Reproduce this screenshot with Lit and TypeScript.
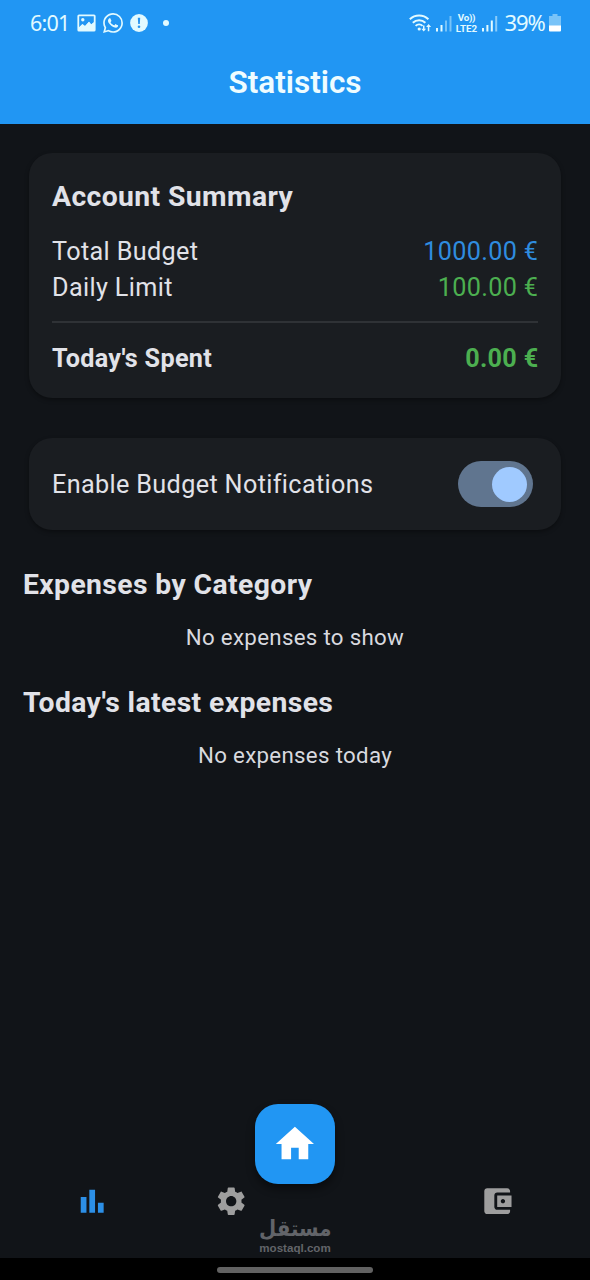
import { LitElement, html, css, svg } from "lit";
import { customElement, property } from "lit/decorators.js";

@customElement("status-bar")
class StatusBar extends LitElement {
  static styles = css`
    :host { display: flex; justify-content: space-between; height: 45px; padding: 0 29px 0 30px; box-sizing: border-box; color: #e2faff; }
    .side { display: flex; align-items: center; height: 46px; }
    .time { font: 400 21.5px/46px "Noto Sans", sans-serif; letter-spacing: -0.8px; width: 47px; }
    .percent { font: 400 22px/44px "Noto Sans", sans-serif; height: 46px; letter-spacing: -1.1px; width: 44.5px; margin-left: 2.5px; white-space: nowrap; }
    .net { display: flex; flex-direction: column; align-items: center; width: 23px; margin: 0 4px 0 3px; font: 700 9.8px/11px Roboto, sans-serif; }
    .net span { display: block; height: 11px; }
    .net span:first-child { letter-spacing: -0.3px; }
    svg { display: block; fill: currentColor; }
    .gap { margin-left: 7px; }
    .dot { width: 6px; height: 6px; border-radius: 50%; background: currentColor; margin-left: 15px; }
    .wifi { margin-right: 3px; }
  `;
  render() {
    return html`
      <div class="side">
        <span class="time">6:01</span>
        <svg width="19" height="18" viewBox="0 0 19 18"><path fill-rule="evenodd" d="M2 0.5h15a1.6 1.6 0 0 1 1.6 1.6v13.8a1.6 1.6 0 0 1-1.6 1.6H2a1.6 1.6 0 0 1-1.6-1.6V2.100a1.600 1.600 0 0 1 1.600-1.600zM2.200 2.300v11l3.300-3.200 2.500 1.900 4-4.200 2.200 2.700 2.600-2.200V2.300zM5.800 4a1.700 1.700 0 1 1 0 3.400 1.700 1.700 0 0 1 0-3.400z"/><path d="M2 17v-3.500l3.300-3.300 2.700 2 4-4.400 2.200 2.700 2.800-2.200V17z"/></svg>
        <svg class="gap" width="20" height="20" viewBox="0 0 24 24"><path d="M17.472 14.382c-.297-.149-1.758-.867-2.030-.967-.273-.099-.471-.148-.670.150-.197.297-.767.966-.940 1.164-.173.199-.347.223-.644.075-.297-.150-1.255-.463-2.390-1.475-.883-.788-1.480-1.761-1.653-2.059-.173-.297-.018-.458.130-.606.134-.133.298-.347.446-.520.149-.174.198-.298.298-.497.099-.198.050-.371-.025-.520-.075-.149-.669-1.612-.916-2.207-.242-.579-.487-.500-.669-.510-.173-.008-.371-.010-.570-.010-.198 0-.520.074-.792.372-.272.297-1.040 1.016-1.040 2.479 0 1.462 1.065 2.875 1.213 3.074.149.198 2.096 3.200 5.077 4.487.709.306 1.262.489 1.694.625.712.227 1.360.195 1.871.118.571-.085 1.758-.719 2.006-1.413.248-.694.248-1.289.173-1.413-.074-.124-.272-.198-.570-.347m-5.421 7.403h-.004a9.870 9.870 0 0 1-5.031-1.378l-.361-.214-3.741.982.998-3.648-.235-.374a9.860 9.860 0 0 1-1.510-5.260c.001-5.450 4.436-9.884 9.888-9.884 2.640 0 5.122 1.030 6.988 2.898a9.825 9.825 0 0 1 2.893 6.994c-.003 5.450-4.437 9.884-9.885 9.884m8.413-18.297A11.815 11.815 0 0 0 12.050 0C5.495 0 .160 5.335.157 11.892c0 2.096.547 4.142 1.588 5.945L.057 24l6.305-1.654a11.882 11.882 0 0 0 5.683 1.448h.005c6.554 0 11.890-5.335 11.893-11.893a11.821 11.821 0 0 0-3.480-8.413z"/></svg>
        <svg class="gap" width="18" height="18" viewBox="0 0 18 18"><circle cx="9" cy="9" r="8.900"/><path d="M7.800 3.800h2.400l-.4 6.200H8.200z" fill="#2a94ee"/><circle cx="9" cy="12.800" r="1.300" fill="#2a94ee"/></svg>
        <span class="dot"></span>
      </div>
      <div class="side">
        <svg class="wifi" width="24" height="20" viewBox="0 0 24 20">
          <g fill="none" stroke="currentColor" stroke-width="2"><path d="M0.800 6.300a13.500 13.500 0 0 1 18.600 0"/><path d="M3.800 9.700a9.200 9.200 0 0 1 12.600 0"/><path d="M6.600 12.900a5 5 0 0 1 7 0"/></g>
          <circle cx="10.200" cy="16" r="1.600"/>
          <path d="M14 12.500h1.500v3.300h1.600l-2.400 2.700-2.400-2.700H14zM20.300 18.300h-1.500V14h-1.700l2.500-3 2.500 3h-1.800z"/>
        </svg>
        <svg width="16" height="18" viewBox="0 0 16 18"><path d="M0 14h2v3.500H0zM4.500 11h2v6.500h-2z"/><path opacity=".45" d="M9 6.500h2v11H9zM13.500 2h2v15.500h-2z"/></svg>
        <span class="net"><span>Vo))</span><span>LTE2</span></span>
        <svg width="20" height="18" viewBox="0 0 20 18"><path d="M0 14h2v3.500H0zM4.400 11h2v6.500h-2zM8.800 6.500h2v11h-2z"/><path opacity=".55" d="M13.200 2h2v15.500h-2z"/></svg>
        <span class="percent">39%</span>
        <svg width="12" height="18" viewBox="0 0 12 18"><path opacity=".45" d="M3.500 0h5v2H12v10H0V2h3.500z"/><path fill="#fff" d="M0 11.500h12v5a1 1 0 0 1-1 1H1a1 1 0 0 1-1-1z"/></svg>
      </div>`;
  }
}

@customElement("summary-row")
class SummaryRow extends LitElement {
  @property() label = "";
  @property() value = "";
  static styles = css`
    :host { display: flex; justify-content: space-between; height: 36px; line-height: 37px; font-size: 25.2px; white-space: nowrap; letter-spacing: 0.36px; }
    .value { color: var(--amount, #4caf50); margin-right: -0.4px; }
  `;
  render() {
    return html`<span>${this.label}</span><span class="value">${this.value}</span>`;
  }
}

const icons = {
  stats: svg`<path d="M4 9h4v11H4zm12 4h4v7h-4zm-6-9h4v16h-4z"/>`,
  settings: svg`<path d="M19.140 12.940c.040-.300.060-.610.060-.940 0-.320-.020-.640-.070-.940l2.030-1.580c.180-.140.230-.410.120-.610l-1.920-3.320c-.120-.220-.370-.290-.590-.220l-2.390.960c-.500-.380-1.030-.700-1.620-.940l-.360-2.540c-.040-.240-.240-.410-.480-.410h-3.840c-.240 0-.430.170-.470.410l-.360 2.540c-.590.240-1.130.570-1.620.940l-2.390-.960c-.220-.080-.470 0-.590.220L2.740 8.870c-.120.210-.080.470.120.610l2.030 1.580c-.050.300-.090.630-.090.940s.020.640.070.940l-2.030 1.580c-.180.140-.230.410-.120.610l1.920 3.320c.120.220.370.290.590.220l2.390-.960c.500.380 1.030.700 1.620.940l.360 2.540c.050.240.240.410.480.410h3.840c.240 0 .440-.170.470-.410l.360-2.540c.590-.240 1.130-.560 1.620-.940l2.390.960c.220.080.470 0 .590-.220l1.920-3.320c.120-.220.070-.470-.120-.610l-2.010-1.580zM12 15.600c-1.980 0-3.600-1.620-3.600-3.600s1.620-3.600 3.600-3.600 3.600 1.620 3.600 3.600-1.620 3.600-3.600 3.600z"/>`,
  wallet: svg`<path d="M21 18v1c0 1.100-.900 2-2 2H5c-1.110 0-2-.900-2-2V5c0-1.100.890-2 2-2h14c1.100 0 2 .900 2 2v1h-9c-1.110 0-2 .900-2 2v8c0 1.100.890 2 2 2h9zm-9-2h10V8H12v8zm4-2.500c-.830 0-1.500-.670-1.500-1.500s.670-1.500 1.500-1.500 1.500.670 1.500 1.500-.670 1.500-1.500 1.500z"/>`,
};

@customElement("app-root")
class AppRoot extends LitElement {
  static styles = css`
    :host { display: flex; flex-direction: column; width: 590px; height: 1280px; overflow: hidden; background: #111418; color: #e1e2e8; font-family: Roboto, sans-serif; }
    header { background: #2196f3; height: 124px; flex: none; }
    h1 { margin: 0; text-align: center; font-size: 31.5px; line-height: 76px; font-weight: 600; color: #eefcff; }
    main { flex: 1; padding: 29px 29px 0; }
    .card { background: #1a1d21; border-radius: 23px; box-shadow: 0 2px 4px rgba(0,0,0,.35); box-sizing: border-box; padding: 23px; }
    .summary { height: 245px; }
    h2 { margin: 0; font-size: 28.3px; height: 41px; line-height: 42px; font-weight: 700; letter-spacing: 0.4px; white-space: nowrap; }
    .rows { padding-top: 16px; }
    .budget { --amount: #2f8cdf; }
    .spent { font-weight: 700; letter-spacing: 0.3px; }
    .rule { height: 2px; margin: 16px 0 17px; background: #2f3236; }
    .notify { margin-top: 40px; height: 92px; display: flex; align-items: center; justify-content: space-between; padding-right: 28px; font-size: 25.2px; letter-spacing: 0.36px; }
    .notify > :first-child { line-height: 36px; padding-top: 2px; }
    .switch { width: 75px; height: 46px; border-radius: 23px; background: #60758f; box-sizing: border-box; padding: 0 6px; display: flex; align-items: center; justify-content: flex-end; }
    .thumb { width: 35px; height: 35px; border-radius: 50%; background: #a0caff; }
    .section { margin: 34px 0 0 -6px; }
    .section + .section { margin-top: 29px; }
    .empty { margin: 16px 0 0 6px; height: 32px; line-height: 33px; text-align: center; font-size: 22.3px; letter-spacing: 0.3px; color: #d8d9df; }
    footer { height: 154px; flex: none; display: flex; flex-direction: column; align-items: center; }
    .fab { width: 80px; height: 80px; flex: none; border-radius: 23px; background: #2196f3; display: flex; align-items: center; justify-content: center; box-shadow: 0 5px 9px rgba(0,0,0,.45); }
    .fab svg { width: 45.800px; height: 45.800px; fill: #fff; }
    nav { display: flex; width: 100%; height: 34.400px; flex: none; box-sizing: border-box; padding-left: 75px; }
    nav svg { width: 34.400px; height: 34.400px; fill: #9e9e9e; }
    nav .active { fill: #2c8fe6; }
    nav .cog { margin-left: 104.500px; }
    nav .last { margin-left: 232px; }
    .brand { display: flex; flex-direction: column; align-items: center; color: #626469; white-space: nowrap; margin-top: -2px; }
    .ar { font: 700 22px/26px "DejaVu Sans", sans-serif; transform: scaleX(.9); }
    .site { font: 700 11.600px/12px "Liberation Sans", sans-serif; }
    .gesture { height: 22px; flex: none; background: #000; display: flex; align-items: center; justify-content: center; }
    .pill { width: 156px; height: 6px; border-radius: 3px; background: #626262; margin-top: 2px; }
  `;
  render() {
    return html`
      <header><status-bar></status-bar><h1>Statistics</h1></header>
      <main>
        <section class="card summary">
          <h2>Account Summary</h2>
          <div class="rows">
            <summary-row class="budget" label="Total Budget" value="1000.00 €"></summary-row>
            <summary-row label="Daily Limit" value="100.00 €"></summary-row>
          </div>
          <div class="rule"></div>
          <summary-row class="spent" label="Today's Spent" value="0.00 €"></summary-row>
        </section>
        <section class="card notify"><span>Enable Budget Notifications</span><span class="switch"><span class="thumb"></span></span></section>
        <section class="section"><h2>Expenses by Category</h2><div class="empty">No expenses to show</div></section>
        <section class="section"><h2>Today's latest expenses</h2><div class="empty">No expenses today</div></section>
      </main>
      <footer>
        <div class="fab"><svg viewBox="0 0 24 24"><path d="M10 20v-6h4v6h5v-8h3L12 3 2 12h3v8z"/></svg></div>
        <nav>
          <svg class="active" viewBox="0 0 24 24">${icons.stats}</svg>
          <svg class="cog" viewBox="0 0 24 24">${icons.settings}</svg>
          <svg class="last" viewBox="0 0 24 24">${icons.wallet}</svg>
        </nav>
        <div class="brand"><span class="ar" lang="ar">مستقل</span><span class="site">mostaql.com</span></div>
      </footer>
      <div class="gesture"><div class="pill"></div></div>`;
  }
}
